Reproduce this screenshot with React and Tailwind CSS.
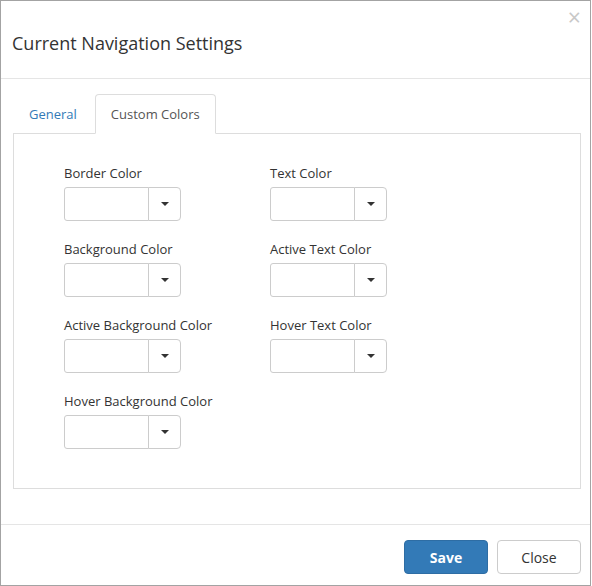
import React from 'react';

const fields = [
  ['Border Color', 'Text Color'],
  ['Background Color', 'Active Text Color'],
  ['Active Background Color', 'Hover Text Color'],
  ['Hover Background Color', null],
];

const ColorPicker = ({ label }) => (
  <div>
    <div className="text-[13px] leading-5 text-[#333] mb-[4px]">{label}</div>
    <div className="flex w-[117px] h-[34px]">
      <div className="w-[85px] h-full border border-[#ccc] rounded-l-[3px] bg-white" />
      <button className="w-[33px] -ml-px h-full border border-[#ccc] rounded-r-[4px] bg-white flex items-center justify-center">
        <span className="w-0 h-0 border-l-[4px] border-r-[4px] border-t-[4px] border-l-transparent border-r-transparent border-t-[#333]" />
      </button>
    </div>
  </div>
);

const App = () => {
  return (
    <div
      className="w-[591px] h-[586px] border border-[#a3a3a3] bg-white text-[#333] flex flex-col"
      style={{ fontFamily: '"Open Sans", "Noto Sans", sans-serif' }}
    >
      {/* Header */}
      <div className="h-[78px] shrink-0 border-b border-[#e5e5e5] flex items-center justify-between pl-[11px] pr-[10px] relative">
        <h4 className="text-[18px] leading-6 text-[#333] mt-[6px]">Current Navigation Settings</h4>
        <span className="absolute right-[9px] top-[5px] text-[23px] font-normal text-[#c8c8c8] leading-[22px]">×</span>
      </div>

      {/* Body */}
      <div className="h-[445px] shrink-0 pt-[15px] pl-[12px] pr-[9px]">
        <div className="flex border-b border-[#ddd] h-[40px]">
          <a className="px-[15px] py-[9px] leading-5 text-[13px] text-[#337ab7] border border-transparent rounded-t-[4px] mr-[2px] -mb-px">
            General
          </a>
          <a className="px-[15px] py-[9px] leading-5 text-[13px] text-[#555] bg-white border border-[#ddd] border-b-white rounded-t-[4px] -mb-px">
            Custom Colors
          </a>
        </div>
        <div className="h-[355px] border-x border-b border-[#ddd] pt-[29px] pl-[50px]">
          <div className="grid grid-cols-[206px_206px] gap-y-[18px]">
            {fields.map(([left, right], i) => (
              <React.Fragment key={i}>
                <ColorPicker label={left} />
                {right ? <ColorPicker label={right} /> : <div />}
              </React.Fragment>
            ))}
          </div>
        </div>
      </div>

      {/* Footer */}
      <div className="flex-1 border-t border-[#e5e5e5] flex justify-end items-start pt-[15px] pr-[9px] gap-[9px]">
        <button className="w-[84px] h-[34px] rounded-[4px] bg-[#337ab7] border border-[#2e6da4] text-white font-bold text-[14px]">
          Save
        </button>
        <button className="w-[84px] h-[34px] rounded-[4px] bg-white border border-[#ccc] text-[#333] text-[14px]">
          Close
        </button>
      </div>
    </div>
  );
};

export default App;
